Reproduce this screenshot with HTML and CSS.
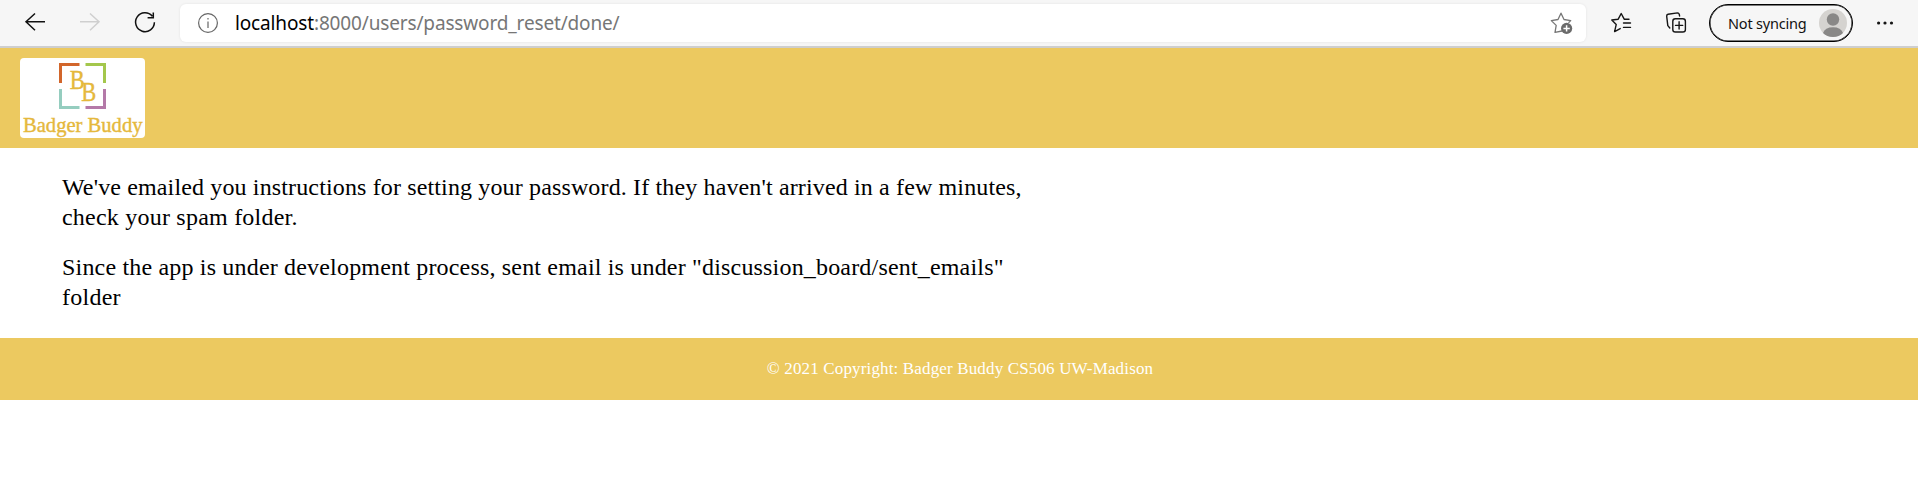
FILE: index.html
```html
<!DOCTYPE html>
<html lang="en">
<head>
<meta charset="utf-8">
<title>Badger Buddy</title>
<link rel="stylesheet" href="styles.css">
</head>
<body>
<div class="toolbar">
  <svg class="nav-icons" width="180" height="46" viewBox="0 0 180 46" fill="none" stroke="#111" stroke-width="1.5">
    <path d="M45 21.8H26M35 13.5L26 21.8L35 30.2"/>
    <path stroke="#cfcfcf" d="M80 21.8H99M90 13.5L99 21.8L90 30.2"/>
    <path d="M152.3 16.3A9.4 9.4 0 1 0 154.4 22.3M153.3 12.5V17.8H147.6"/>
  </svg>
  <div class="address">
    <svg class="info" width="22" height="22" viewBox="0 0 22 22" fill="none" stroke="#666" stroke-width="1.2"><circle cx="11" cy="11" r="9.4"/><path d="M11 9.5V16M11 6V7.6"/></svg>
    <div class="url"><span class="host">localhost</span>:8000/users/password_reset/done/</div>
    <svg class="star" width="24" height="24" viewBox="0 0 24 24" fill="none" stroke="#767676" stroke-width="1.3" stroke-linejoin="round"><path d="M12 20L5 21.3L6.2 14.4L1.3 9.6L8 8.5L11 2.2L14 8.5L20.7 9.6L18.5 11.8"/><circle cx="16.6" cy="17.4" r="5.6" fill="#6b6b6b" stroke="none"/><path stroke="#fff" stroke-width="1.5" d="M16.6 14.2V20.6M13.4 17.4H19.8"/></svg>
  </div>
  <svg class="tools" width="100" height="46" viewBox="0 0 100 46" fill="none" stroke="#151515" stroke-width="1.4" stroke-linejoin="round" stroke-linecap="round">
    <path d="M33 19.2H28.2L25.2 13.5L22.2 19.2L15.8 20L20.2 24.6L18.6 31.6L24.2 28.6M27.5 23H34.5M27.5 27.4H34.5"/>
    <path d="M73.8 28L71.8 25.6L70.7 16.4Q70.4 14.6 72 14.2L81.5 12.9Q83.3 12.9 83.6 16"/>
    <rect x="76.8" y="18.8" width="12.6" height="13.2" rx="2.6"/><path d="M83.1 21.8V29M79.5 25.4H86.7"/>
  </svg>
  <div class="profile">
    <span class="sync">Not syncing</span>
    <svg width="28" height="28" viewBox="0 0 28 28"><circle cx="14" cy="14" r="14" fill="#d5d3d0"/><circle cx="14" cy="10.5" r="6.2" fill="#898887"/><path d="M4 24Q6 18.3 14 18.3T24 24Q20 28 14 28T4 24Z" fill="#898887"/></svg>
  </div>
  <svg class="more" width="18" height="6" viewBox="0 0 18 6" fill="#151515"><circle cx="2.6" cy="3" r="1.6"/><circle cx="9" cy="3" r="1.6"/><circle cx="15.5" cy="3" r="1.6"/></svg>
</div>
<header class="banner">
  <svg class="logo" width="125" height="80" viewBox="0 0 125 80">
    <g fill="none" stroke-width="3">
      <path stroke="#d2662b" d="M40.5 25V6.5H59.5"/><path stroke="#a4c74c" d="M65.5 6.5H84.5V25"/>
      <path stroke="#95cdbf" d="M40.5 31V49.5H59.5"/><path stroke="#b479a8" d="M65.5 49.5H84.5V31"/>
    </g>
    <g class="logo-text">
      <text x="49.8" y="31" font-size="27" textLength="15" lengthAdjust="spacingAndGlyphs">B</text>
      <text x="61.3" y="42.7" font-size="27" textLength="15" lengthAdjust="spacingAndGlyphs">B</text>
      <text x="3" y="73.5" font-size="21" textLength="119.5" lengthAdjust="spacingAndGlyphs">Badger Buddy</text>
    </g>
  </svg>
</header>
<main class="content">
  <p><span class="line-a">We've emailed you instructions for setting your password. If they haven't arrived in a few minutes,</span><br><span class="line-b">check your spam folder.</span></p>
  <p><span class="line-c">Since the app is under development process, sent email is under "discussion_board/sent_emails"</span><br><span class="line-d">folder</span></p>
</main>
<footer class="footer"><span>© 2021 Copyright: Badger Buddy CS506 UW-Madison</span></footer>
</body>
</html>
```
FILE: styles.css
```css
body { margin: 0; background: #fff; }
svg { display: block; flex: none; }
.toolbar { display: flex; box-sizing: border-box; height: 48px; background: #f6f6f6; border-bottom: 2px solid #cecece; font-family: "Noto Sans", sans-serif; }
.address { display: flex; align-items: center; box-sizing: border-box; width: 1406px; height: 38px; margin-top: 4px; padding: 0 12px 0 17px; background: #fff; border-radius: 6px; box-shadow: 0 0 3px rgba(0,0,0,.08); }
.url { flex: 1; margin-left: 16px; font-size: 19px; line-height: 26px; letter-spacing: -.15px; color: #767676; white-space: nowrap; }
.host { color: #000; }
.tools { margin-left: 10px; }
.tools, .nav-icons { height: 46px; }
.profile { display: flex; align-items: center; justify-content: space-between; box-sizing: border-box; width: 144px; height: 38px; margin: 3.5px 0 0 13px; padding: 0 5px 0 18px; border: 1px solid #000; box-shadow: inset 0 0 0 .5px #000; border-radius: 19px; }
.sync { font-size: 14.5px; line-height: 20px; letter-spacing: -.2px; color: #111; }
.more { margin: 20px 0 0 23px; }
.banner { box-sizing: border-box; height: 100px; padding: 10px 20px; background: #ecc960; }
.logo { background: #fff; border-radius: 4px; }
.logo-text { font-family: "Liberation Serif", serif; fill: #e5b83c; stroke: #e5b83c; stroke-width: .4px; }
.content { box-sizing: border-box; height: 190px; padding: 24px 62px 0; font-family: "Liberation Serif", serif; font-size: 24px; line-height: 30px; color: #000; white-space: nowrap; }
.content p { margin: 0 0 20px; }
.line-a { letter-spacing: .14px; }
.line-b { letter-spacing: .22px; }
.line-c { letter-spacing: .18px; }
.line-d { letter-spacing: .25px; }
.footer { display: flex; align-items: center; justify-content: center; box-sizing: border-box; height: 62px; padding-left: 2px; background: #ecc960; color: #fff; font-family: "Liberation Serif", serif; font-size: 17px; line-height: 24px; letter-spacing: .15px; }
```
